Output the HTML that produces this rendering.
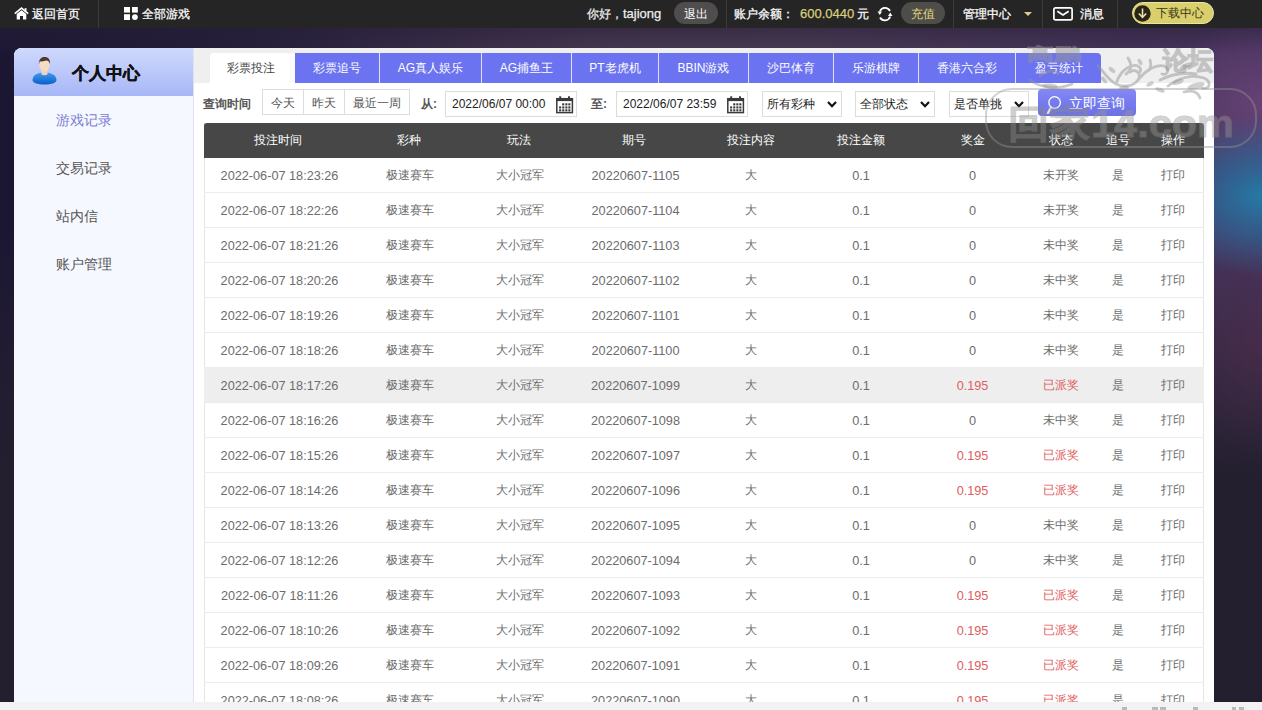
<!DOCTYPE html>
<html><head><meta charset="utf-8">
<style>
*{margin:0;padding:0;box-sizing:border-box}
html,body{width:1262px;height:710px;overflow:hidden}
body{font-family:"Liberation Sans",sans-serif;font-size:13px;color:#333;position:relative;background:#1c1833}
.a{position:absolute;white-space:nowrap}
.bg{position:absolute;left:0;top:28px;width:1262px;height:682px;
 background:
  radial-gradient(ellipse 110px 80px at 1262px 168px, rgba(35,125,170,.95), rgba(35,120,170,.55) 45%, rgba(35,120,170,0) 100%),
  radial-gradient(ellipse 110px 80px at 1262px 75px, rgba(120,75,130,.6), rgba(120,75,130,0) 100%),
    radial-gradient(ellipse 80px 110px at 1262px 320px, rgba(85,45,75,.45), rgba(85,45,75,0) 100%),
  linear-gradient(180deg, rgba(35,31,46,0) 0%, rgba(35,31,46,0) 30%, rgba(40,32,48,.45) 45%, rgba(35,31,46,1) 66%),
  linear-gradient(180deg, rgba(40,30,55,.5) 0%, rgba(40,30,55,0) 4%),
  linear-gradient(90deg,#1b1733 0%,#221d38 16%,#29233f 24%,#352a46 32%,#473952 47%,#4a3d55 63%,#45345a 89%,#4a3560 100%);}
.top{position:absolute;left:0;top:0;width:1262px;height:28px;background:#252525;color:#fff;font-size:12px}
.top .it{position:absolute;top:0;height:28px;line-height:28px;white-space:nowrap;-webkit-text-stroke:0.25px currentColor}
.L{font-size:13px}
.sep{position:absolute;top:0;width:1px;height:28px;background:#3c3b3b}
.pill{position:absolute;top:2px;height:22px;border-radius:11px;line-height:24px;text-align:center}
.panel{position:absolute;left:14px;top:48px;width:1200px;height:654px;background:#fff;border-radius:8px 8px 0 0}
.side{position:absolute;left:14px;top:48px;width:180px;height:654px;background:#f5f8fe;border-right:1px solid #dfe3ee;border-radius:8px 0 0 0;overflow:hidden}
.side .hd{position:absolute;left:0;top:0;width:179px;height:48px;background:linear-gradient(180deg,#cfd9fd 0%,#a7b7f7 100%)}
.menu{position:absolute;left:56px;font-size:14px;color:#555;line-height:20px;white-space:nowrap}
.tabbar{position:absolute;left:194px;top:48px;width:1020px;height:35px;background:#efefef;border-radius:0 8px 0 0}
.tab{position:absolute;top:53px;height:30px;line-height:31px;text-align:center;color:#fff;background:#6c73f0;font-size:12px;border-right:1px solid #dfe1fb}
.tab.on{background:#fff;color:#444;border-right:none;border-radius:3px 3px 0 0}
.fl{position:absolute;font-size:12px;color:#555;white-space:nowrap}
.grp{position:absolute;left:262px;top:88px;width:148px;height:27px;border:1px solid #dcdcdc;background:#fff}
.grp span{position:absolute;top:0;height:25px;line-height:26px;text-align:center;color:#555;border-right:1px solid #dcdcdc;font-size:12px}
.inp{position:absolute;top:91px;height:26px;border:1px solid #dcdcdc;background:#fff;color:#222;line-height:24px;padding-left:6px;font-size:12px}
.sel{position:absolute;top:91px;height:26px;border:1px solid #dcdcdc;background:#fff;color:#222;line-height:24px;padding-left:4px;font-size:12px}
.sel svg{position:absolute;right:4.5px;top:9px}
.btn{position:absolute;left:1038px;top:89px;width:98px;height:27px;border-radius:4px;background:linear-gradient(180deg,#8489f3 0%,#7278ee 60%,#6c71e2 100%);color:#fff;font-size:14px;line-height:27px}
.tbl{position:absolute;left:204px;top:123px;width:1000px;height:579px;border-left:1px solid #e6e6e6;border-right:1px solid #e6e6e6}
.th{position:absolute;left:-1px;top:0;width:1000px;height:35px;background:#474747;color:#fff;border-radius:3px 3px 0 0}
.th .c{line-height:36px}
.row{position:absolute;left:-1px;width:1000px;height:35px;border-bottom:1px solid #ececec;color:#6c6c6c}
.row .c{line-height:36px}
.row.hl{background:#eeeeee}
.c{position:absolute;top:0;width:120px;text-align:center;white-space:nowrap;font-size:12.7px}
.z{font-size:12px;position:relative;top:-1px}
.red{color:#e15d5d}
.foot{position:absolute;left:0;top:702px;width:1262px;height:8px;background:#f2f2f2}
.wm{position:absolute;left:0;top:0;pointer-events:none}
</style></head><body>
<div class="bg"></div>
<div class="top">
  <svg class="a" style="left:14px;top:7px" width="15" height="13" viewBox="0 0 15 13"><path d="M0.8 6.6 L7.5 1.2 L14.2 6.6" stroke="#fff" stroke-width="1.7" fill="none"/><rect x="10.6" y="1.2" width="1.9" height="3.6" fill="#fff"/><path d="M2.7 7 L7.5 3.2 L12.3 7 L12.3 12.6 L9 12.6 L9 9 L6 9 L6 12.6 L2.7 12.6 Z" fill="#fff"/></svg>
  <div class="it" style="left:32px">返回首页</div>
  <div class="sep" style="left:98px"></div>
  <svg class="a" style="left:124px;top:7px" width="14" height="13" viewBox="0 0 14 13"><rect x="0" y="0" width="6" height="5.6" fill="#fff"/><rect x="8" y="0" width="5.8" height="5.6" fill="#fff"/><rect x="0" y="7.2" width="6" height="5.8" fill="#fff"/><circle cx="10.9" cy="10.1" r="2.9" fill="#fff"/></svg>
  <div class="it" style="left:142px">全部游戏</div>
  <div class="it" style="left:587px;color:#eee">你好，<span class="L">tajiong</span></div>
  <div class="pill" style="left:674px;width:44px;background:#4f4d4d">退出</div>
  <div class="sep" style="left:726px"></div>
  <div class="it" style="left:734px">账户余额：</div>
  <div class="it" style="left:800px;color:#d8cf7c;font-size:13px">600.0440</div>
  <div class="it" style="left:857px">元</div>
  <svg class="a" style="left:877px;top:7px" width="16" height="15" viewBox="0 0 16 15"><path d="M3 10.5 A5.6 5.6 0 0 0 13.2 9.5" stroke="#fff" stroke-width="1.8" fill="none"/><path d="M2.8 4.5 A5.6 5.6 0 0 1 13 4" stroke="#fff" stroke-width="1.8" fill="none"/><path d="M0.5 4.5 L5 4.5 L2.8 8 Z" fill="#fff"/><path d="M11 9 L15.5 9 L13.2 5.5 Z" fill="#fff"/></svg>
  <div class="pill" style="left:901px;width:44px;background:#4f4d4a;color:#e2d77e">充值</div>
  <div class="sep" style="left:953px"></div>
  <div class="it" style="left:963px">管理中心</div>
  <svg class="a" style="left:1024px;top:12px" width="8" height="4" viewBox="0 0 8 4"><path d="M0 0 L8 0 L4 4 Z" fill="#d8cf8c"/></svg>
  <div class="sep" style="left:1042px"></div>
  <svg class="a" style="left:1053px;top:7px" width="20" height="14" viewBox="0 0 20 14"><rect x="0.9" y="0.9" width="18.2" height="12" rx="1.5" stroke="#fff" stroke-width="1.7" fill="none"/><path d="M4.3 4.3 L10 8 L15.7 4.3" stroke="#fff" stroke-width="1.7" fill="none"/></svg>
  <div class="it" style="left:1080px">消息</div>
  <div class="sep" style="left:1117px"></div>
  <div class="pill" style="left:1132px;width:82px;background:#d9d06b;border:1px solid #ebe4a8;color:#3a3420;line-height:20px;text-align:left"><span style="position:absolute;left:23px;top:0">下载中心</span>
    <svg style="position:absolute;left:1px;top:2px" width="17" height="17" viewBox="0 0 17 17"><circle cx="8.5" cy="8.5" r="8.2" fill="#2a2418"/><path d="M8.5 3.5 L8.5 12" stroke="#e9e2a8" stroke-width="1.6"/><path d="M4.8 8.5 L8.5 12.3 L12.2 8.5" stroke="#e9e2a8" stroke-width="1.6" fill="none"/></svg>
  </div>
</div>

<div class="panel"></div>
<div class="side">
  <div class="hd"></div>
</div>
<svg class="a" style="left:31px;top:56px" width="27" height="29" viewBox="0 0 27 29">
  <defs><linearGradient id="bd" x1="0" y1="0" x2="0" y2="1"><stop offset="0" stop-color="#3f9bf0"/><stop offset="1" stop-color="#0a5fc8"/></linearGradient></defs>
  <path d="M1.5 24 C2 18.5 7 16.5 13.5 16.5 C20 16.5 25 18.5 25.5 24 C25.5 27 20 28.5 13.5 28.5 C7 28.5 1.5 27 1.5 24 Z" fill="url(#bd)"/>
  <path d="M10.5 14 L16.5 14 L16.5 18.5 C15 19.5 12 19.5 10.5 18.5 Z" fill="#f3d3b8"/>
  <ellipse cx="13.5" cy="8.8" rx="5.2" ry="6.3" fill="#f7dcc4"/>
  <path d="M8 8.5 C7.5 3.5 10 1 13.5 1 C17.5 1 19.5 3.5 19 8.5 C18.5 5.5 17 5 15.5 4.6 C13 5.5 10 5.5 8.8 5.2 C8.3 6 8.2 7 8 8.5 Z" fill="#4a3a30"/>
</svg>
<div class="a" style="left:72px;top:61px;font-size:17px;font-weight:bold;color:#111;line-height:26px;-webkit-text-stroke:0.4px #111">个人中心</div>
<div class="menu" style="top:110px;color:#7b7bd6">游戏记录</div>
<div class="menu" style="top:158px">交易记录</div>
<div class="menu" style="top:206px">站内信</div>
<div class="menu" style="top:254px">账户管理</div>

<div class="tabbar"></div>
<div class="a" style="left:289px;top:53px;width:6px;height:30px;background:#fbfbfb"></div>
<div class="tab on" style="left:210px;width:79px;text-indent:2px">彩票投注</div>
<div class="tab" style="left:295px;width:85px">彩票追号</div>
<div class="tab" style="left:380px;width:102px">AG真人娱乐</div>
<div class="tab" style="left:482px;width:90px">AG捕鱼王</div>
<div class="tab" style="left:572px;width:87px">PT老虎机</div>
<div class="tab" style="left:659px;width:90px">BBIN游戏</div>
<div class="tab" style="left:749px;width:85px">沙巴体育</div>
<div class="tab" style="left:834px;width:85px">乐游棋牌</div>
<div class="tab" style="left:919px;width:97px">香港六合彩</div>
<div class="tab" style="left:1016px;width:85px;border-right:none;border-radius:0 4px 0 0">盈亏统计</div>

<div class="fl" style="left:203px;top:94px;font-weight:bold;line-height:20px">查询时间</div>
<div class="grp" style="left:262px;top:89px;height:26px"><span style="left:0;width:41px">今天</span><span style="left:41px;width:41px">昨天</span><span style="left:82px;width:64px;border-right:none">最近一周</span></div>
<div class="fl" style="left:421px;top:94px;font-weight:bold;line-height:20px">从:</div>
<div class="inp" style="left:445px;width:132px">2022/06/07 00:00</div>
<svg class="a" style="left:556px;top:96px" width="18" height="18" viewBox="0 0 18 18"><rect x="0.8" y="2.7" width="15.6" height="13.9" fill="none" stroke="#3a3a3a" stroke-width="1.5"/><rect x="0.8" y="2.7" width="15.6" height="2.4" fill="#3a3a3a"/><rect x="3.2" y="0.3" width="2" height="3.6" fill="#3a3a3a"/><rect x="12" y="0.3" width="2" height="3.6" fill="#3a3a3a"/><g fill="#3a3a3a"><rect x="6.2" y="7.3" width="2.1" height="2.1"/><rect x="9.3" y="7.3" width="2.1" height="2.1"/><rect x="12.3" y="7.3" width="2.1" height="2.1"/><rect x="3.1" y="10.4" width="2.1" height="2.1"/><rect x="6.2" y="10.4" width="2.1" height="2.1"/><rect x="9.3" y="10.4" width="2.1" height="2.1"/><rect x="12.3" y="10.4" width="2.1" height="2.1"/><rect x="3.1" y="13.3" width="2.1" height="2.1"/><rect x="6.2" y="13.3" width="2.1" height="2.1"/><rect x="9.3" y="13.3" width="2.1" height="2.1"/><rect x="12.3" y="13.3" width="2.1" height="2.1"/></g></svg>
<div class="fl" style="left:591px;top:94px;font-weight:bold;line-height:20px">至:</div>
<div class="inp" style="left:616px;width:132px">2022/06/07 23:59</div>
<svg class="a" style="left:727px;top:96px" width="18" height="18" viewBox="0 0 18 18"><rect x="0.8" y="2.7" width="15.6" height="13.9" fill="none" stroke="#3a3a3a" stroke-width="1.5"/><rect x="0.8" y="2.7" width="15.6" height="2.4" fill="#3a3a3a"/><rect x="3.2" y="0.3" width="2" height="3.6" fill="#3a3a3a"/><rect x="12" y="0.3" width="2" height="3.6" fill="#3a3a3a"/><g fill="#3a3a3a"><rect x="6.2" y="7.3" width="2.1" height="2.1"/><rect x="9.3" y="7.3" width="2.1" height="2.1"/><rect x="12.3" y="7.3" width="2.1" height="2.1"/><rect x="3.1" y="10.4" width="2.1" height="2.1"/><rect x="6.2" y="10.4" width="2.1" height="2.1"/><rect x="9.3" y="10.4" width="2.1" height="2.1"/><rect x="12.3" y="10.4" width="2.1" height="2.1"/><rect x="3.1" y="13.3" width="2.1" height="2.1"/><rect x="6.2" y="13.3" width="2.1" height="2.1"/><rect x="9.3" y="13.3" width="2.1" height="2.1"/><rect x="12.3" y="13.3" width="2.1" height="2.1"/></g></svg>
<div class="sel" style="left:762px;width:80px">所有彩种<svg width="10" height="7" viewBox="0 0 10 7"><path d="M1 1 L5 5.2 L9 1" stroke="#111" stroke-width="2.2" fill="none"/></svg></div>
<div class="sel" style="left:855px;width:80px">全部状态<svg width="10" height="7" viewBox="0 0 10 7"><path d="M1 1 L5 5.2 L9 1" stroke="#111" stroke-width="2.2" fill="none"/></svg></div>
<div class="sel" style="left:949px;width:80px">是否单挑<svg width="10" height="7" viewBox="0 0 10 7"><path d="M1 1 L5 5.2 L9 1" stroke="#111" stroke-width="2.2" fill="none"/></svg></div>
<div class="btn"><svg style="position:absolute;left:7px;top:3px" width="20" height="22" viewBox="0 0 20 22"><circle cx="9.6" cy="10.5" r="5.8" stroke="#fff" stroke-width="1.3" fill="none"/><path d="M6 15.5 L3 21" stroke="#ddd" stroke-width="2.6" stroke-linecap="round"/></svg><span style="position:absolute;left:31px;top:1px">立即查询</span></div>

<div class="tbl">
<div class="th"><div class="c" style="left:14.0px"><span class="z">投注时间</span></div><div class="c" style="left:144.5px"><span class="z">彩种</span></div><div class="c" style="left:255.0px"><span class="z">玩法</span></div><div class="c" style="left:370.0px"><span class="z">期号</span></div><div class="c" style="left:486.5px"><span class="z">投注内容</span></div><div class="c" style="left:597.0px"><span class="z">投注金额</span></div><div class="c" style="left:708.5px"><span class="z">奖金</span></div><div class="c" style="left:797.0px"><span class="z">状态</span></div><div class="c" style="left:854.0px"><span class="z">追号</span></div><div class="c" style="left:909.0px"><span class="z">操作</span></div></div><div class="row" style="top:35px"><div class="c" style="left:15.5px">2022-06-07 18:23:26</div><div class="c" style="left:146.0px"><span class="z">极速赛车</span></div><div class="c" style="left:256.0px"><span class="z">大小冠军</span></div><div class="c" style="left:371.5px">20220607-1105</div><div class="c" style="left:486.5px"><span class="z">大</span></div><div class="c" style="left:597.0px">0.1</div><div class="c" style="left:708.5px">0</div><div class="c" style="left:797.0px"><span class="z">未开奖</span></div><div class="c" style="left:854.0px"><span class="z">是</span></div><div class="c" style="left:909.0px"><span class="z">打印</span></div></div>
<div class="row" style="top:70px"><div class="c" style="left:15.5px">2022-06-07 18:22:26</div><div class="c" style="left:146.0px"><span class="z">极速赛车</span></div><div class="c" style="left:256.0px"><span class="z">大小冠军</span></div><div class="c" style="left:371.5px">20220607-1104</div><div class="c" style="left:486.5px"><span class="z">大</span></div><div class="c" style="left:597.0px">0.1</div><div class="c" style="left:708.5px">0</div><div class="c" style="left:797.0px"><span class="z">未开奖</span></div><div class="c" style="left:854.0px"><span class="z">是</span></div><div class="c" style="left:909.0px"><span class="z">打印</span></div></div>
<div class="row" style="top:105px"><div class="c" style="left:15.5px">2022-06-07 18:21:26</div><div class="c" style="left:146.0px"><span class="z">极速赛车</span></div><div class="c" style="left:256.0px"><span class="z">大小冠军</span></div><div class="c" style="left:371.5px">20220607-1103</div><div class="c" style="left:486.5px"><span class="z">大</span></div><div class="c" style="left:597.0px">0.1</div><div class="c" style="left:708.5px">0</div><div class="c" style="left:797.0px"><span class="z">未中奖</span></div><div class="c" style="left:854.0px"><span class="z">是</span></div><div class="c" style="left:909.0px"><span class="z">打印</span></div></div>
<div class="row" style="top:140px"><div class="c" style="left:15.5px">2022-06-07 18:20:26</div><div class="c" style="left:146.0px"><span class="z">极速赛车</span></div><div class="c" style="left:256.0px"><span class="z">大小冠军</span></div><div class="c" style="left:371.5px">20220607-1102</div><div class="c" style="left:486.5px"><span class="z">大</span></div><div class="c" style="left:597.0px">0.1</div><div class="c" style="left:708.5px">0</div><div class="c" style="left:797.0px"><span class="z">未中奖</span></div><div class="c" style="left:854.0px"><span class="z">是</span></div><div class="c" style="left:909.0px"><span class="z">打印</span></div></div>
<div class="row" style="top:175px"><div class="c" style="left:15.5px">2022-06-07 18:19:26</div><div class="c" style="left:146.0px"><span class="z">极速赛车</span></div><div class="c" style="left:256.0px"><span class="z">大小冠军</span></div><div class="c" style="left:371.5px">20220607-1101</div><div class="c" style="left:486.5px"><span class="z">大</span></div><div class="c" style="left:597.0px">0.1</div><div class="c" style="left:708.5px">0</div><div class="c" style="left:797.0px"><span class="z">未中奖</span></div><div class="c" style="left:854.0px"><span class="z">是</span></div><div class="c" style="left:909.0px"><span class="z">打印</span></div></div>
<div class="row" style="top:210px"><div class="c" style="left:15.5px">2022-06-07 18:18:26</div><div class="c" style="left:146.0px"><span class="z">极速赛车</span></div><div class="c" style="left:256.0px"><span class="z">大小冠军</span></div><div class="c" style="left:371.5px">20220607-1100</div><div class="c" style="left:486.5px"><span class="z">大</span></div><div class="c" style="left:597.0px">0.1</div><div class="c" style="left:708.5px">0</div><div class="c" style="left:797.0px"><span class="z">未中奖</span></div><div class="c" style="left:854.0px"><span class="z">是</span></div><div class="c" style="left:909.0px"><span class="z">打印</span></div></div>
<div class="row hl" style="top:245px"><div class="c" style="left:15.5px">2022-06-07 18:17:26</div><div class="c" style="left:146.0px"><span class="z">极速赛车</span></div><div class="c" style="left:256.0px"><span class="z">大小冠军</span></div><div class="c" style="left:371.5px">20220607-1099</div><div class="c" style="left:486.5px"><span class="z">大</span></div><div class="c" style="left:597.0px">0.1</div><div class="c red" style="left:708.5px">0.195</div><div class="c red" style="left:797.0px"><span class="z">已派奖</span></div><div class="c" style="left:854.0px"><span class="z">是</span></div><div class="c" style="left:909.0px"><span class="z">打印</span></div></div>
<div class="row" style="top:280px"><div class="c" style="left:15.5px">2022-06-07 18:16:26</div><div class="c" style="left:146.0px"><span class="z">极速赛车</span></div><div class="c" style="left:256.0px"><span class="z">大小冠军</span></div><div class="c" style="left:371.5px">20220607-1098</div><div class="c" style="left:486.5px"><span class="z">大</span></div><div class="c" style="left:597.0px">0.1</div><div class="c" style="left:708.5px">0</div><div class="c" style="left:797.0px"><span class="z">未中奖</span></div><div class="c" style="left:854.0px"><span class="z">是</span></div><div class="c" style="left:909.0px"><span class="z">打印</span></div></div>
<div class="row" style="top:315px"><div class="c" style="left:15.5px">2022-06-07 18:15:26</div><div class="c" style="left:146.0px"><span class="z">极速赛车</span></div><div class="c" style="left:256.0px"><span class="z">大小冠军</span></div><div class="c" style="left:371.5px">20220607-1097</div><div class="c" style="left:486.5px"><span class="z">大</span></div><div class="c" style="left:597.0px">0.1</div><div class="c red" style="left:708.5px">0.195</div><div class="c red" style="left:797.0px"><span class="z">已派奖</span></div><div class="c" style="left:854.0px"><span class="z">是</span></div><div class="c" style="left:909.0px"><span class="z">打印</span></div></div>
<div class="row" style="top:350px"><div class="c" style="left:15.5px">2022-06-07 18:14:26</div><div class="c" style="left:146.0px"><span class="z">极速赛车</span></div><div class="c" style="left:256.0px"><span class="z">大小冠军</span></div><div class="c" style="left:371.5px">20220607-1096</div><div class="c" style="left:486.5px"><span class="z">大</span></div><div class="c" style="left:597.0px">0.1</div><div class="c red" style="left:708.5px">0.195</div><div class="c red" style="left:797.0px"><span class="z">已派奖</span></div><div class="c" style="left:854.0px"><span class="z">是</span></div><div class="c" style="left:909.0px"><span class="z">打印</span></div></div>
<div class="row" style="top:385px"><div class="c" style="left:15.5px">2022-06-07 18:13:26</div><div class="c" style="left:146.0px"><span class="z">极速赛车</span></div><div class="c" style="left:256.0px"><span class="z">大小冠军</span></div><div class="c" style="left:371.5px">20220607-1095</div><div class="c" style="left:486.5px"><span class="z">大</span></div><div class="c" style="left:597.0px">0.1</div><div class="c" style="left:708.5px">0</div><div class="c" style="left:797.0px"><span class="z">未中奖</span></div><div class="c" style="left:854.0px"><span class="z">是</span></div><div class="c" style="left:909.0px"><span class="z">打印</span></div></div>
<div class="row" style="top:420px"><div class="c" style="left:15.5px">2022-06-07 18:12:26</div><div class="c" style="left:146.0px"><span class="z">极速赛车</span></div><div class="c" style="left:256.0px"><span class="z">大小冠军</span></div><div class="c" style="left:371.5px">20220607-1094</div><div class="c" style="left:486.5px"><span class="z">大</span></div><div class="c" style="left:597.0px">0.1</div><div class="c" style="left:708.5px">0</div><div class="c" style="left:797.0px"><span class="z">未中奖</span></div><div class="c" style="left:854.0px"><span class="z">是</span></div><div class="c" style="left:909.0px"><span class="z">打印</span></div></div>
<div class="row" style="top:455px"><div class="c" style="left:15.5px">2022-06-07 18:11:26</div><div class="c" style="left:146.0px"><span class="z">极速赛车</span></div><div class="c" style="left:256.0px"><span class="z">大小冠军</span></div><div class="c" style="left:371.5px">20220607-1093</div><div class="c" style="left:486.5px"><span class="z">大</span></div><div class="c" style="left:597.0px">0.1</div><div class="c red" style="left:708.5px">0.195</div><div class="c red" style="left:797.0px"><span class="z">已派奖</span></div><div class="c" style="left:854.0px"><span class="z">是</span></div><div class="c" style="left:909.0px"><span class="z">打印</span></div></div>
<div class="row" style="top:490px"><div class="c" style="left:15.5px">2022-06-07 18:10:26</div><div class="c" style="left:146.0px"><span class="z">极速赛车</span></div><div class="c" style="left:256.0px"><span class="z">大小冠军</span></div><div class="c" style="left:371.5px">20220607-1092</div><div class="c" style="left:486.5px"><span class="z">大</span></div><div class="c" style="left:597.0px">0.1</div><div class="c red" style="left:708.5px">0.195</div><div class="c red" style="left:797.0px"><span class="z">已派奖</span></div><div class="c" style="left:854.0px"><span class="z">是</span></div><div class="c" style="left:909.0px"><span class="z">打印</span></div></div>
<div class="row" style="top:525px"><div class="c" style="left:15.5px">2022-06-07 18:09:26</div><div class="c" style="left:146.0px"><span class="z">极速赛车</span></div><div class="c" style="left:256.0px"><span class="z">大小冠军</span></div><div class="c" style="left:371.5px">20220607-1091</div><div class="c" style="left:486.5px"><span class="z">大</span></div><div class="c" style="left:597.0px">0.1</div><div class="c red" style="left:708.5px">0.195</div><div class="c red" style="left:797.0px"><span class="z">已派奖</span></div><div class="c" style="left:854.0px"><span class="z">是</span></div><div class="c" style="left:909.0px"><span class="z">打印</span></div></div>
<div class="row" style="top:560px"><div class="c" style="left:15.5px">2022-06-07 18:08:26</div><div class="c" style="left:146.0px"><span class="z">极速赛车</span></div><div class="c" style="left:256.0px"><span class="z">大小冠军</span></div><div class="c" style="left:371.5px">20220607-1090</div><div class="c" style="left:486.5px"><span class="z">大</span></div><div class="c" style="left:597.0px">0.1</div><div class="c red" style="left:708.5px">0.195</div><div class="c red" style="left:797.0px"><span class="z">已派奖</span></div><div class="c" style="left:854.0px"><span class="z">是</span></div><div class="c" style="left:909.0px"><span class="z">打印</span></div></div>
</div>
<div class="foot"></div>

<svg class="wm" width="1262" height="710" viewBox="0 0 1262 710">
  <g opacity=".42">
  <rect x="986" y="89" width="270" height="58" rx="26" fill="none" stroke="#969696" stroke-width="2"/>
  <text x="1008" y="137" font-family="Liberation Sans" font-weight="bold" font-size="38" textLength="226" lengthAdjust="spacingAndGlyphs" fill="#9a9a9a" stroke="#8a8a8a" stroke-width="1">回家14.com</text>
  </g>
  <g opacity=".5" fill="#969696" stroke="#969696">
  <text x="1163" y="69" font-family="Liberation Sans" font-weight="bold" font-size="25" stroke-width="1.2">论坛</text>
  <text x="1027" y="60" font-family="Liberation Sans" font-weight="bold" font-size="17" textLength="53" lengthAdjust="spacingAndGlyphs" stroke-width="0.8">高鹏</text>
  </g>
  <g opacity=".5" fill="none" stroke="#969696" stroke-width="2.8" stroke-linecap="round">
   <path d="M1098 66 C1104 72 1108 80 1116 84 C1124 88 1134 86 1138 80 C1142 74 1136 68 1130 72"/>
   <path d="M1116 84 C1118 76 1124 68 1132 66 C1138 64 1142 68 1140 72"/>
   <path d="M1128 58 C1132 64 1132 70 1126 74"/>
   <path d="M1138 80 C1146 70 1156 64 1164 66 C1170 68 1168 76 1162 74"/>
   <path d="M1150 60 C1152 66 1150 70 1146 72"/>
   <path d="M1168 86 C1178 78 1192 74 1204 78 C1212 82 1210 90 1202 88"/>
   <path d="M1160 80 C1172 74 1184 72 1196 74"/>
   <path d="M1184 92 C1192 90 1198 92 1200 98"/>
   <path d="M1030 80 C1040 88 1058 90 1072 84"/>
   <path d="M1040 76 C1046 70 1054 70 1058 74"/>
  </g>
  <g opacity=".45" fill="#969696">
   <ellipse cx="1112" cy="70" rx="4" ry="2" transform="rotate(40 1112 70)"/>
   <ellipse cx="1124" cy="88" rx="5" ry="2.2" transform="rotate(-10 1124 88)"/>
   <ellipse cx="1150" cy="84" rx="4" ry="2" transform="rotate(-30 1150 84)"/>
   <ellipse cx="1178" cy="82" rx="6" ry="2.5" transform="rotate(-20 1178 82)"/>
   <ellipse cx="1140" cy="62" rx="3.5" ry="1.8" transform="rotate(60 1140 62)"/>
   <ellipse cx="1196" cy="86" rx="9" ry="3" transform="rotate(-15 1196 86)"/>
   <ellipse cx="1186" cy="66" rx="7" ry="2.6" transform="rotate(-25 1186 66)"/>
   <ellipse cx="1104" cy="80" rx="4" ry="2" transform="rotate(50 1104 80)"/>
   <ellipse cx="1160" cy="90" rx="5" ry="2" transform="rotate(20 1160 90)"/>
   <ellipse cx="1050" cy="86" rx="8" ry="2.5" transform="rotate(5 1050 86)"/>
  </g>
  <g opacity=".35" fill="#555">
   <rect x="1122" y="707" width="5" height="3"/><rect x="1152" y="707" width="6" height="3"/><rect x="1160" y="707" width="6" height="3"/><rect x="1193" y="707" width="5" height="3"/><rect x="1232" y="707" width="4" height="3"/><rect x="1239" y="707" width="5" height="3"/>
  </g>
</svg>
</body></html>
